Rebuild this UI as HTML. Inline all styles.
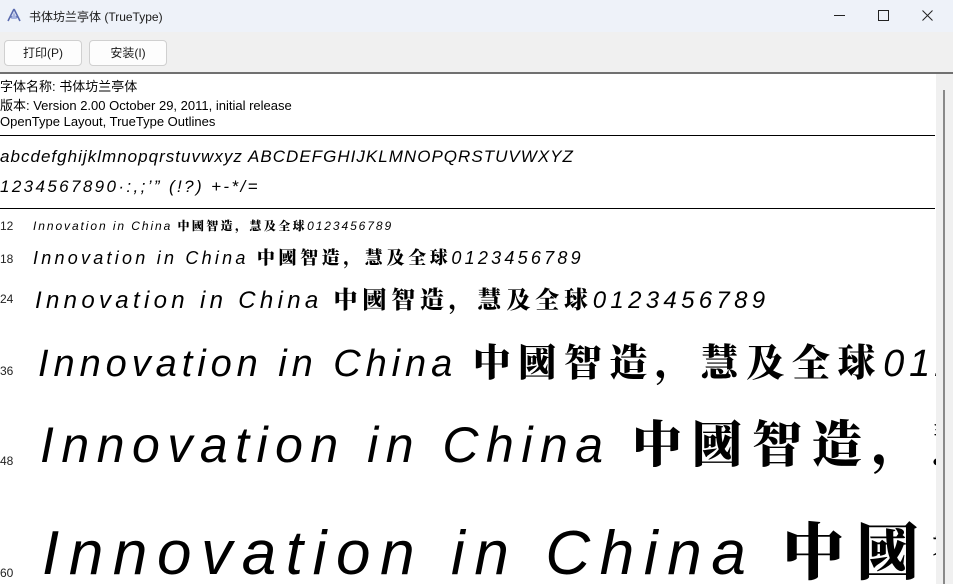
<!DOCTYPE html>
<html><head><meta charset="utf-8"><style>
body{margin:0;width:953px;height:584px;overflow:hidden;background:#fff;font-family:"Liberation Sans","Noto Sans CJK SC",sans-serif;position:relative}
.title{position:absolute;left:0;top:0;width:953px;height:32px;background:#eef2f9}
.tool{position:absolute;left:0;top:32px;width:953px;height:40px;background:#f0f0f0;border-bottom:2px solid #707070}
.btn{position:absolute;top:8px;height:24px;border:1px solid #d0d0d0;border-radius:4px;background:#fdfdfd;font-size:12px;line-height:24px;text-align:center;color:#1a1a1a}
.content{position:absolute;left:0;top:74px;width:936px;height:510px;overflow:hidden;background:#fff}
.sb{position:absolute;left:936px;top:74px;width:17px;height:510px;background:#f0f0f0}
.t{position:absolute;left:0;font-size:13px;color:#000;white-space:nowrap}
.hr{position:absolute;left:0;width:935px;height:1px;background:#000}
.s{position:absolute;white-space:nowrap;font-style:italic;letter-spacing:0.16em;color:#000}
.s b{font-family:"Noto Serif CJK SC",serif;font-style:normal;font-weight:900;letter-spacing:0.2em}
.lab{position:absolute;left:0;font-size:12px;color:#222}
</style></head><body>
<div class="title">
<svg style="position:absolute;left:7px;top:8px" width="14" height="14" viewBox="0 0 14 14"><path d="M7 1L1 13M7 1L13 13M3 9H11" stroke="#5a6bb0" stroke-width="1.6" fill="none"/><path d="M7 4L4 11H10Z" fill="#a8b4e0"/></svg>
<div style="position:absolute;left:29px;top:8px;font-size:12px;color:#1a1a1a">书体坊兰亭体 (TrueType)</div>
<div style="position:absolute;left:834px;top:15px;width:11px;height:1px;background:#222"></div>
<div style="position:absolute;left:878px;top:10px;width:9px;height:9px;border:1px solid #222"></div>
<svg style="position:absolute;left:922px;top:10px" width="11" height="11"><path d="M0.5 0.5L10.5 10.5M10.5 0.5L0.5 10.5" stroke="#222" stroke-width="1"/></svg>
</div>
<div class="tool">
<div class="btn" style="left:4px;width:76px">打印(P)</div>
<div class="btn" style="left:89px;width:76px">安装(I)</div>
</div>
<div class="content">
<div class="t" style="top:2px">字体名称: 书体坊兰亭体</div>
<div class="t" style="top:21px">版本: Version 2.00 October 29, 2011, initial release</div>
<div class="t" style="top:40px">OpenType Layout, TrueType Outlines</div>
<div class="hr" style="top:61px"></div>
<div class="s" style="top:73px;left:0;font-size:17px;letter-spacing:0.06em">abcdefghijklmnopqrstuvwxyz ABCDEFGHIJKLMNOPQRSTUVWXYZ</div>
<div class="s" style="top:103px;left:0;font-size:17px;letter-spacing:0.14em">1234567890·:,;’” (!?) +-*/=</div>
<div class="hr" style="top:134px"></div>
<div class="lab" style="top:145px">12</div>
<div class="s" style="top:145px;left:33px;font-size:12px;line-height:14px">Innovation in China <b>中國智造，慧及全球</b>0123456789</div>
<div class="lab" style="top:178px">18</div>
<div class="s" style="top:172px;left:33px;font-size:18px;line-height:22px;letter-spacing:0.18em">Innovation in China <b>中國智造，慧及全球</b>0123456789</div>
<div class="lab" style="top:218px">24</div>
<div class="s" style="top:209px;left:35px;font-size:24px;line-height:30px;letter-spacing:0.18em">Innovation in China <b>中國智造，慧及全球</b>0123456789</div>
<div class="lab" style="top:290px">36</div>
<div class="s" style="top:264px;left:38px;font-size:38px;line-height:44px;letter-spacing:0.13em">Innovation in China <b>中國智造，慧及全球</b>0123456789</div>
<div class="lab" style="top:380px">48</div>
<div class="s" style="top:338px;left:40px;font-size:50px;line-height:58px;letter-spacing:0.15em">Innovation in China <b>中國智造，慧及全球</b></div>
<div class="lab" style="top:492px">60</div>
<div class="s" style="top:438px;left:42px;font-size:62px;line-height:72px;letter-spacing:0.155em">Innovation in China <b>中國智造</b></div>
</div>
<div class="sb"><div style="position:absolute;left:7px;top:16px;width:2px;height:494px;background:#8a8a8a"></div></div>
</body></html>
